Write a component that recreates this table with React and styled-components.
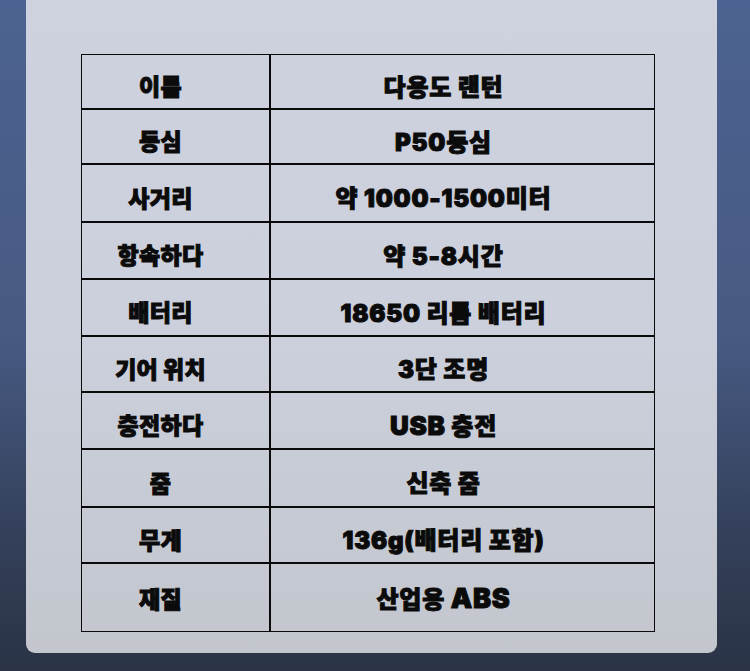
import React from 'react';
import styled, { createGlobalStyle } from 'styled-components';

const GlobalStyle = createGlobalStyle`
  html, body {
    margin: 0;
    padding: 0;
  }
  body {
    width: 750px;
    height: 671px;
    overflow: hidden;
    background: linear-gradient(180deg, #4c6290 0%, #475a83 50%, #34405a 80%, #2a3346 100%);
    font-family: Inter, "Noto Sans CJK KR", "Noto Sans", sans-serif;
  }
`;

const Page = styled.div`
  display: flex;
  padding: 0 33px 18px 26px;
`;

const Card = styled.div`
  flex: 1;
  height: 653px;
  box-sizing: border-box;
  padding: 54px 62px 0 55px;
  background: linear-gradient(180deg, #cdd2de 0%, #cbd0dc 50%, #c3c6cd 100%);
  border-radius: 0 0 9px 9px;
`;

const Table = styled.div`
  display: grid;
  grid-template-columns: 189px 1fr;
  border: 1.5px solid #0a0a0a;
`;

const Cell = styled.div`
  display: flex;
  align-items: center;
  justify-content: center;
  box-sizing: border-box;
  height: ${(p) => p.$h}px;
  padding: ${(p) => (p.$last ? '0' : '7px')} ${(p) => (p.$label ? '30px' : '38px')} 0 0;
  border-bottom: ${(p) => (p.$last ? 'none' : '2px solid #0a0a0a')};
  border-right: ${(p) => (p.$label ? '2px solid #0a0a0a' : 'none')};
  color: #0b0b0b;
`;

const Text = styled.span`
  font-weight: 900;
  font-size: ${(p) => (p.$value ? 24 : 23)}px;
  letter-spacing: ${(p) => (p.$value ? '0.8px' : '0.3px')};
  white-space: pre;
  -webkit-text-stroke: 1px #0b0b0b;
`;

const Latin = styled.span`
  font-size: ${(p) => p.$size}px;
`;

const rows = [
  ['이름', '다용도 랜턴', 55],
  ['등심', 'P50등심', 55],
  ['사거리', '약 1000-1500미터', 58],
  ['항속하다', '약 5-8시간', 57],
  ['배터리', '18650 리튬 배터리', 57],
  ['기어 위치', '3단 조명', 56],
  ['충전하다', <><Latin $size={26}>USB</Latin>{' 충전'}</>, 57],
  ['줌', '신축 줌', 58],
  ['무게', '136g(배터리 포함)', 56],
  ['재질', <>{'산업용 '}<Latin $size={27}>ABS</Latin></>, 67]
];

export default function App() {
  return (
    <>
      <GlobalStyle />
      <Page>
        <Card>
          <Table>
            {rows.map(([label, value, h], i) => {
              const last = i === rows.length - 1;
              return (
                <React.Fragment key={i}>
                  <Cell $label $h={h} $last={last}>
                    <Text>{label}</Text>
                  </Cell>
                  <Cell $h={h} $last={last}>
                    <Text $value>{value}</Text>
                  </Cell>
                </React.Fragment>
              );
            })}
          </Table>
        </Card>
      </Page>
    </>
  );
}
